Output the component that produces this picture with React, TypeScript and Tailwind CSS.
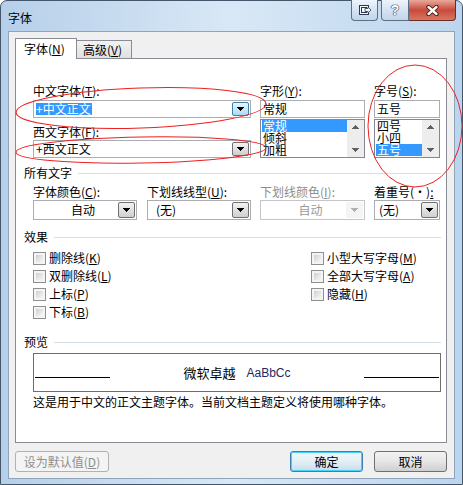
import React from 'react';

const cjk = "font-['Noto_Sans_CJK_SC',sans-serif]";

function Down({ color = '#000' }: { color?: string }) {
  return (
    <svg width="7" height="4" viewBox="0 0 7 4" shapeRendering="crispEdges">
      <path d="M0 0h7L3.5 4z" fill={color} />
    </svg>
  );
}

function Up({ color = '#000' }: { color?: string }) {
  return (
    <svg width="7" height="4" viewBox="0 0 7 4" shapeRendering="crispEdges">
      <path d="M0 4h7L3.5 0z" fill={color} />
    </svg>
  );
}

function Label({ text, k, tail = ':', gray }: { text: string; k: string; tail?: string; gray?: boolean }) {
  return (
    <div className={`h-[14px] leading-[14px] whitespace-nowrap ${gray ? 'text-[#8d8d8d]' : 'text-black'}`}>
      {text}(<span className="underline underline-offset-1">{k}</span>){tail}
    </div>
  );
}

function DropBtn({ hot, disabled }: { hot?: boolean; disabled?: boolean }) {
  const cls = disabled
    ? 'border-transparent bg-[#f4f4f4]'
    : hot
      ? 'border-[#3c7fb1] bg-linear-to-b from-[#eaf6fd] to-[#a9dbf6]'
      : 'border-[#707070] bg-linear-to-b from-[#f2f2f2] to-[#cfcfcf]';
  return (
    <div className={`w-[17px] border rounded-[2px] flex items-center justify-center ${cls}`}>
      <Down color={disabled ? '#b0b0b0' : '#000'} />
    </div>
  );
}

function Combo({
  className,
  children,
  hot,
  disabled,
  center,
}: {
  className: string;
  children: React.ReactNode;
  hot?: boolean;
  disabled?: boolean;
  center?: boolean;
}) {
  return (
    <div className={`flex border bg-white p-px ${disabled ? 'border-[#c3c5c8]' : 'border-[#abadb3]'} ${className}`}>
      <div
        className={`flex-1 flex items-center pl-[1px] leading-none ${center ? 'justify-center' : ''} ${
          disabled ? 'text-[#9a9a9a]' : 'text-black'
        }`}
      >
        {children}
      </div>
      <DropBtn hot={hot} disabled={disabled} />
    </div>
  );
}

function ListBox({ items, sel, className }: { items: string[]; sel: number; className: string }) {
  return (
    <div className={`flex border border-[#828790] bg-white ${className}`}>
      <div className="flex-1 pl-px pt-0">
        {items.map((it, i) => (
          <div
            key={it}
            className={`h-[12px] leading-[12px] pl-[1px] ${i === sel ? 'bg-[#3399ff] text-white' : 'text-black'}`}
          >
            {it}
          </div>
        ))}
      </div>
      <div className="w-[17px] bg-[#ededed] flex flex-col justify-between items-center py-[5px]">
        <Up color="#606060" />
        <Down color="#606060" />
      </div>
    </div>
  );
}

function Group({ title, className = '' }: { title: string; className?: string }) {
  return (
    <div className={`flex items-center h-[14px] gap-[6px] ${className}`}>
      <span className="leading-[14px]">{title}</span>
      <div className="flex-1 h-px bg-[#d5dfe5]" />
    </div>
  );
}

function Check({ text, k }: { text: string; k: string }) {
  return (
    <div className="flex items-center h-[18px]">
      <div className="w-[13px] h-[13px] border border-[#8e8f8f] bg-[#f4f4f4] p-[2px]">
        <div className="w-full h-full bg-linear-to-br from-[#cdd0d4] to-[#f7f7f7]" />
      </div>
      <span className="ml-[3px] leading-[14px]">
        {text}(<span className="underline underline-offset-1">{k}</span>)
      </span>
    </div>
  );
}

function Button({ children, primary, disabled, className }: { children: React.ReactNode; primary?: boolean; disabled?: boolean; className: string }) {
  const cls = disabled
    ? 'border-[#adb2b5] bg-[#f4f4f4] text-[#8f8f8f]'
    : primary
      ? 'border-[#3c7fb1] bg-linear-to-b from-[#eef7fc] via-[#e3eff7] to-[#c8dde9] text-black shadow-[inset_0_0_0_1px_#48d0f8]'
      : 'border-[#707070] bg-linear-to-b from-[#f2f2f2] via-[#e6e6e6] to-[#cfcfcf] text-black';
  return (
    <div className={`h-[21px] rounded-[3px] border flex items-center justify-center leading-none ${cls} ${className}`}>
      {children}
    </div>
  );
}

export default function App() {
  return (
    <div
      className={`relative w-[463px] h-[485px] rounded-t-[7px] border border-[#44566c] bg-linear-to-r from-[#b6cfe9] via-[#d9e8f6] to-[#bcd5ee] text-[12px] ${cjk}`}
    >
      {/* Title bar */}
      <div className="h-[30px] flex items-start justify-between pl-[7px] pr-[6px]">
        <div className="pt-[10px] leading-[14px] text-black">字体</div>
        <div className="flex items-start gap-[3px] -mt-px">
          <div className="w-[27px] h-[21px] rounded-b-[4px] border border-t-0 border-[#5b6f87] bg-linear-to-b from-[#eef4fb] via-[#d6e3f2] to-[#c2d5ea] flex items-center justify-center">
            <svg width="12" height="10" viewBox="0 0 12 10">
              <rect x="0.5" y="0.5" width="9" height="9" fill="#f4f7fb" stroke="#2b3a4e" />
              <rect x="2.5" y="2.5" width="5" height="5" fill="none" stroke="#2b3a4e" />
              <path d="M6 3.5h3V2l3 3-3 3V6.5H6z" fill="#f4f7fb" stroke="#2b3a4e" strokeWidth="0.8" />
            </svg>
          </div>
          <div className="flex">
            <div className="w-[28px] h-[21px] rounded-bl-[4px] border border-t-0 border-[#5b6f87] bg-linear-to-b from-[#eef4fb] via-[#d6e3f2] to-[#c2d5ea] flex items-center justify-center">
              <span className="font-['Liberation_Sans',sans-serif] font-bold text-[14px] leading-none text-white [text-shadow:0_0_1px_#1c2a3c,0_0_1px_#1c2a3c,0_0_1px_#1c2a3c]">?</span>
            </div>
            <div className="w-[47px] h-[21px] rounded-br-[4px] border border-t-0 border-l-0 border-[#6e2b22] bg-linear-to-b from-[#e8a899] via-[#c64a3c] to-[#d8765f] flex items-center justify-center">
              <svg width="13" height="11" viewBox="0 0 13 11">
                <path d="M2.5 2 L10.5 9 M10.5 2 L2.5 9" stroke="#3b1510" strokeWidth="4.2" strokeLinecap="round" />
                <path d="M2.5 2 L10.5 9 M10.5 2 L2.5 9" stroke="#fff" strokeWidth="2.4" strokeLinecap="round" />
              </svg>
            </div>
          </div>
        </div>
      </div>

      {/* Client area */}
      <div className="mx-[7px] h-[448px] border border-[#8fa3ba] bg-[#f0f0f0] flex flex-col">
        {/* Tabs */}
        <div className="flex items-end h-[26px] pl-[6px] pt-[6px]">
          <div className="relative z-10 w-[62px] h-[21px] -mb-px border border-b-0 border-[#898c95] bg-white flex items-center pl-[8px] leading-[14px]">
            字体(<span className="underline underline-offset-1">N</span>)
          </div>
          <div className="w-[56px] h-[18px] -ml-px border border-b-0 border-[#898c95] bg-linear-to-b from-[#f2f2f2] to-[#e0e0e0] flex items-center pl-[6px] leading-[14px]">
            高级(<span className="underline underline-offset-1">V</span>)
          </div>
        </div>

        {/* Panel */}
        <div className="ml-[6px] w-[432px] h-[385px] border border-[#898c95] bg-white pl-[8px] pr-[5px] pt-[25px]">
          {/* Fonts / style / size */}
          <div className="flex pl-[9px]">
            <div className="w-[218px] flex flex-col">
              <Label text="中文字体" k="T" />
              <Combo className="mt-[2px] h-[18px]" hot>
                <span className="bg-[#3399ff] text-white h-[12px] leading-[12px] pr-px">+中文正文</span>
              </Combo>
              <div className="mt-[7px]">
                <Label text="西文字体" k="F" />
              </div>
              <Combo className="mt-px h-[18px]">
                <span>+西文正文</span>
              </Combo>
            </div>
            <div className="ml-[9px] w-[105px] flex flex-col">
              <Label text="字形" k="Y" />
              <div className="mt-[2px] h-[18px] border border-[#abadb3] bg-white flex items-center pl-[2px] leading-none">常规</div>
              <ListBox className="mt-px h-[39px]" items={['常规', '倾斜', '加粗']} sel={0} />
            </div>
            <div className="ml-[9px] w-[66px] flex flex-col">
              <Label text="字号" k="S" />
              <div className="mt-[2px] h-[18px] border border-[#abadb3] bg-white flex items-center pl-[2px] leading-none">五号</div>
              <ListBox className="mt-px h-[39px]" items={['四号', '小四', '五号']} sel={2} />
            </div>
          </div>

          {/* All text */}
          <Group title="所有文字" className="mt-[8px]" />
          <div className="flex pl-[9px] mt-[5px]">
            <div className="w-[104px] flex flex-col">
              <Label text="字体颜色" k="C" />
              <Combo className="mt-px h-[20px]" center>
                <span className="pl-[12px]">自动</span>
              </Combo>
            </div>
            <div className="ml-[10px] w-[104px] flex flex-col">
              <Label text="下划线线型" k="U" />
              <Combo className="mt-px h-[20px]">
                <span className="pl-[6px]">(无)</span>
              </Combo>
            </div>
            <div className="ml-[9px] w-[105px] flex flex-col">
              <Label text="下划线颜色" k="I" gray />
              <Combo className="mt-px h-[20px]" center disabled>
                <span className="pl-[12px]">自动</span>
              </Combo>
            </div>
            <div className="ml-[9px] w-[66px] flex flex-col">
              <div className="h-[14px] leading-[14px] whitespace-nowrap">
                着重号(·)<span className="underline underline-offset-1">:</span>
              </div>
              <Combo className="mt-px h-[20px]">
                <span className="pl-[2px]">(无)</span>
              </Combo>
            </div>
          </div>

          {/* Effects */}
          <Group title="效果" className="mt-[10px]" />
          <div className="flex pl-[9px] mt-[5px]">
            <div className="w-[278px] flex flex-col">
              <Check text="删除线" k="K" />
              <Check text="双删除线" k="L" />
              <Check text="上标" k="P" />
              <Check text="下标" k="B" />
            </div>
            <div className="flex flex-col">
              <Check text="小型大写字母" k="M" />
              <Check text="全部大写字母" k="A" />
              <Check text="隐藏" k="H" />
            </div>
          </div>

          {/* Preview */}
          <Group title="预览" className="mt-[14px]" />
          <div className="pl-[9px]">
            <div className="mt-[4px] w-[408px] h-[39px] border border-[#6d6d6d] flex items-center px-px">
              <div className="w-[75px] h-px bg-black mt-[10px]" />
              <div className="flex-1 flex items-center justify-center gap-[11px]">
                <span className="text-[13px] leading-none">微软卓越</span>
                <span className="font-['Liberation_Sans',sans-serif] text-[12px] leading-none text-[#1b2a63]">AaBbCc</span>
              </div>
              <div className="w-[75px] h-px bg-black mt-[10px]" />
            </div>
            <div className="mt-[3px] h-[14px] leading-[14px]">
              这是用于中文的正文主题字体。当前文档主题定义将使用哪种字体。
            </div>
          </div>
        </div>

        {/* Buttons */}
        <div className="flex mt-[8px] pl-[6px]">
          <Button className="w-[94px]" disabled>
            设为默认值(<span className="underline underline-offset-1">D</span>)
          </Button>
          <Button className="ml-[181px] w-[73px]" primary>
            确定
          </Button>
          <Button className="ml-[11px] w-[73px]">取消</Button>
        </div>
      </div>

      {/* Red annotation ellipses */}
      <svg className="absolute -top-px -left-px pointer-events-none" width="463" height="485" viewBox="0 0 463 485">
        <ellipse cx="141" cy="108" rx="125" ry="20" transform="rotate(-2 141 108)" fill="none" stroke="#ee2020" strokeWidth="1" />
        <ellipse cx="141" cy="150" rx="125" ry="13" transform="rotate(-1 141 150)" fill="none" stroke="#ee2020" strokeWidth="1" />
        <ellipse cx="415" cy="126" rx="47" ry="61" fill="none" stroke="#ee2020" strokeWidth="1" />
      </svg>
    </div>
  );
}
